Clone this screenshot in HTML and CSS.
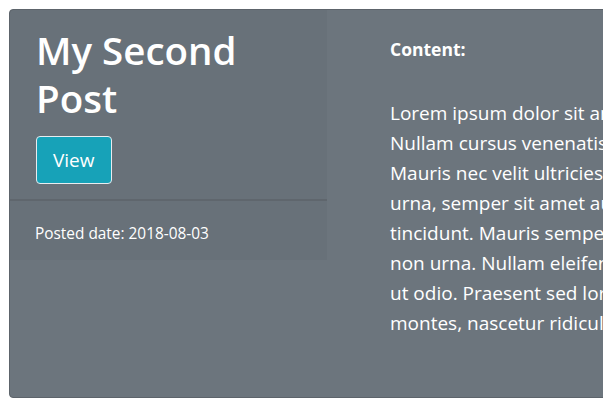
FILE: index.html
```html
<!DOCTYPE html>
<html lang="en">
<head>
<meta charset="utf-8">
<title>My Second Post</title>
<link rel="stylesheet" href="styles.css">
</head>
<body>
<div class="card">
  <div class="side">
    <div class="side-card">
      <div class="side-body">
        <h1 class="title">My Second Post</h1>
        <a class="btn" href="#">View</a>
      </div>
      <div class="side-footer">Posted date: 2018-08-03</div>
    </div>
  </div>
  <div class="main">
    <div class="label">Content:</div>
    <div class="text">
      <span class="line">Lorem ipsum dolor sit amet, consectetur adipiscing elit.</span>
      <span class="line">Nullam cursus venenatis lectus, vel ultrices nibh luctus eget.</span>
      <span class="line">Mauris nec velit ultricies, dictum turpis ac, cursus lorem.</span>
      <span class="line">urna, semper sit amet auctor id, malesuada a lacus. Vivamus</span>
      <span class="line">tincidunt. Mauris semper, nisi at tempor fringilla, erat nisi</span>
      <span class="line">non urna. Nullam eleifend aliquet risus, vitae tempus velit</span>
      <span class="line">ut odio. Praesent sed lorem sit amet. Cum sociis natoque penatibus</span>
      <span class="line">montes, nascetur ridiculus mus.</span>
    </div>
  </div>
</div>
</body>
</html>
```

FILE: styles.css
```css
html, body {
  margin: 0;
  padding: 0;
  overflow: hidden;
  background: #ffffff;
}
body {
  padding: 9px 0 0 9px;
  width: 1200px;
  font-family: "Open Sans", "Noto Sans", sans-serif;
  color: #ffffff;
}
.card {
  display: flex;
  align-items: flex-start;
  width: 1100px;
  height: 387px;
  background: #6c757d;
  border: 1px solid #5d646b;
  border-radius: 4px;
}
.side {
  width: 317px;
  flex: none;
}
.side-card {
  background: rgba(0, 0, 0, 0.03);
}
.side-body {
  padding: 16px 0 15px 26px;
}
.title {
  margin: 0 0 14px;
  font-size: 38.5px;
  line-height: 48px;
  font-weight: 600;
  width: 240px;
}
.btn {
  display: inline-block;
  box-sizing: border-box;
  height: 48px;
  padding: 0 16px;
  line-height: 46px;
  font-size: 19px;
  color: #ffffff;
  text-decoration: none;
  background: #17a2b8;
  border: 1px solid #e9ecef;
  border-radius: 4px;
  vertical-align: top;
}
.side-footer {
  border-top: 2px solid #5f666d;
  padding: 22px 0 15px 25px;
  font-size: 15.4px;
  line-height: 22px;
}
.main {
  padding: 24px 0 0 63px;
  font-size: 19px;
  line-height: 30px;
}
.label {
  font-weight: 700;
  font-size: 17.5px;
  margin-bottom: 34px;
}
.text .line {
  display: block;
  white-space: nowrap;
}
```
